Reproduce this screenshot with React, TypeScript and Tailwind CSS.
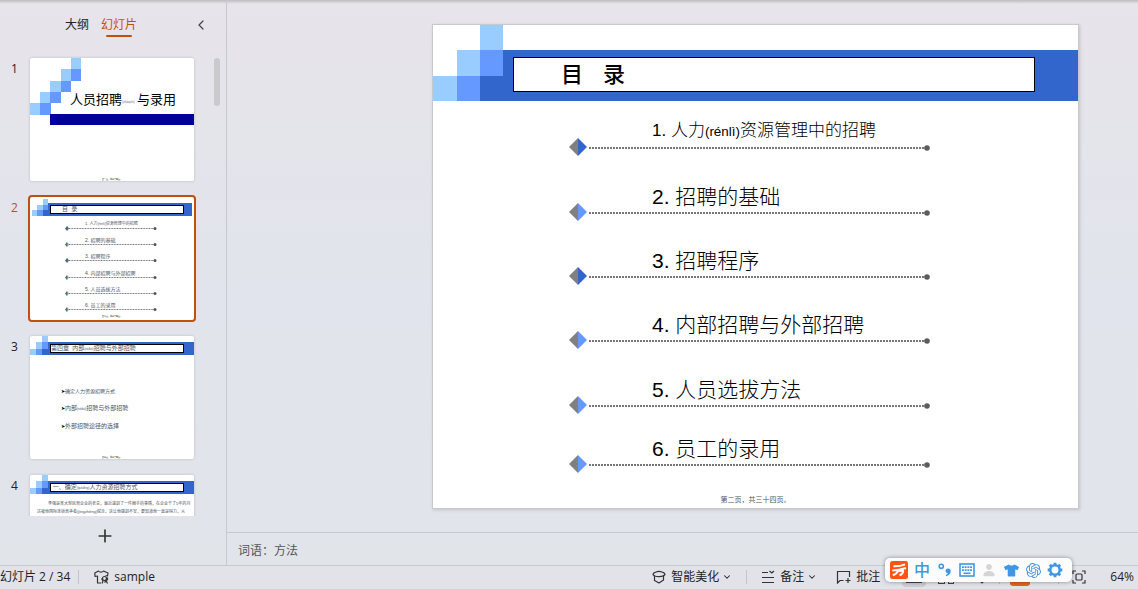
import React from "react";
import { ChevronDown, ChevronLeft, Plus } from "lucide-react";
import { FaTshirt } from "react-icons/fa";
import { IoPerson } from "react-icons/io5";
import { SiOpenai } from "react-icons/si";

const UI_FONT = "font-['Open_Sans','Noto_Sans_CJK_SC',sans-serif]";
const SLIDE_FONT = "font-['Liberation_Sans','Noto_Sans_CJK_SC',sans-serif]";

interface AgendaItem {
  no: number;
  text: React.ReactNode;
  color: string;
  gap: string;
  thumbGap: string;
}

const AGENDA: AgendaItem[] = [
  {
    no: 1,
    text: (
      <>
        人力<span className="text-[79%]">(rénlì)</span>资源管理中的招聘
      </>
    ),
    color: "#3366cc",
    gap: "pt-[19px] text-[17px]",
    thumbGap: "pt-[5px] text-[4px]",
  },
  { no: 2, text: "招聘的基础", color: "#6699ff", gap: "pt-[30px] text-[21px]", thumbGap: "pt-[6px] text-[5px]" },
  { no: 3, text: "招聘程序", color: "#3366cc", gap: "pt-[29px] text-[21px]", thumbGap: "pt-[6px] text-[5px]" },
  { no: 4, text: "内部招聘与外部招聘", color: "#6699ff", gap: "pt-[29px] text-[21px]", thumbGap: "pt-[7px] text-[5px]" },
  { no: 5, text: "人员选拔方法", color: "#6699ff", gap: "pt-[30px] text-[21px]", thumbGap: "pt-[6px] text-[5px]" },
  { no: 6, text: "员工的录用", color: "#6699ff", gap: "pt-[24px] text-[21px]", thumbGap: "pt-[6px] text-[5px]" },
];

function Stairs({ className }: { className: string }) {
  return (
    <svg className={className} viewBox="0 0 70 76" preserveAspectRatio="none" shapeRendering="crispEdges" aria-hidden="true">
      <path d="M47 0h23v26H47zM24 25h23v26H24zM0 51h24v25H0z" fill="#99ccff" />
      <path d="M47 25h23v26H47zM24 51h23v25H24z" fill="#6699ff" />
      <path d="M47 51h23v25H47z" fill="#3366cc" />
    </svg>
  );
}

function ThumbHeader({ compact = false, children }: { compact?: boolean; children: React.ReactNode }) {
  return (
    <div className="flex">
      <Stairs className={compact ? "h-[17px] w-4 shrink-0" : "h-[19px] w-[18px] shrink-0"} />
      <div className={compact ? "flex-1 pt-1" : "flex-1 pt-[6px]"}>
        <div className={`h-[13px] bg-[#3366cc] pt-[2px] pl-[2px] ${compact ? "pr-2" : "pr-[10px]"}`}>
          <div className="h-[9px] border border-black bg-white text-[6px] leading-[7px] whitespace-pre text-gray-600">
            {children}
          </div>
        </div>
      </div>
    </div>
  );
}

function ThumbFooter({ children }: { children: React.ReactNode }) {
  return (
    <div className="mt-auto text-center text-[2px] leading-[4px] text-black">{children}</div>
  );
}

function TitleThumb() {
  return (
    <>
      <div className="flex items-end">
        <svg className="h-[57px] w-[51px] shrink-0" viewBox="0 0 51 57" shapeRendering="crispEdges" aria-hidden="true">
          <path d="M41 0h10v11H41zM31 11h10v12H31zM20 23h11v11H20zM10 34h10v11H10zM0 45h10v12H0z" fill="#99ccff" />
          <path d="M41 11h10v12H41zM31 23h10v11H31zM20 34h11v11H20zM10 45h11v12H10z" fill="#6699ff" />
        </svg>
        <div className="-ml-[11px] flex items-center pb-[3px] text-[13px] leading-[20px] whitespace-nowrap text-black">
          人员招聘<span className="w-[15px] pt-1 text-[3px] text-gray-500">(zhāopìn)</span>与录用
        </div>
      </div>
      <div className="-mt-px ml-5 h-[11px] bg-[#000099]" />
      <ThumbFooter>第一页，共三十四页。</ThumbFooter>
    </>
  );
}

function AgendaThumb() {
  return (
    <>
      <ThumbHeader compact>
        <span className="pl-[11px]">目  录</span>
      </ThumbHeader>
      <ul className="ml-[33px] w-[92px]">
        {AGENDA.map((item) => (
          <li key={item.no} className={item.thumbGap}>
            <div className="pl-5 leading-[6px] whitespace-nowrap text-gray-600">
              {item.no}. {item.text}
            </div>
            <svg className="-mt-px block h-[5px] w-full" viewBox="0 0 92 5" aria-hidden="true">
              <path d="M2 0v5L0 2.500z" fill="#666" />
              <path d="M2 0v5l2-2.500z" fill={item.color} />
              <path d="M4 2.500h85" stroke="#777" strokeDasharray="1 .6" />
              <circle cx="90" cy="2.500" r="1.500" fill="#555" />
            </svg>
          </li>
        ))}
      </ul>
      <ThumbFooter>第二页，共三十四页。</ThumbFooter>
    </>
  );
}

function ChapterThumb() {
  return (
    <>
      <ThumbHeader>
        第四章  内部<span className="text-[3px]">(nèibù)</span>招聘与外部招聘
      </ThumbHeader>
      <ul className="mt-8 ml-[31px] flex flex-col gap-[9px] text-[6px] leading-[8px] whitespace-nowrap text-gray-600">
        <li className="text-[5px]">
          <span className="text-black">➤</span>确定人力资源招聘方式
        </li>
        <li>
          <span className="text-[5px] text-black">➤</span>内部<span className="text-[3px]">(nèibù)</span>招聘与外部招聘
        </li>
        <li>
          <span className="text-[5px] text-black">➤</span>外部招聘途径的选择
        </li>
      </ul>
      <ThumbFooter>第三页，共三十四页。</ThumbFooter>
    </>
  );
}

function BodyThumb() {
  return (
    <>
      <ThumbHeader>
        {" "}一、确定<span className="text-[3px]">(quèdìng)</span>人力资源招聘方式
      </ThumbHeader>
      <p className="mt-[6px] pl-[7px] text-[4px] leading-[8px] whitespace-nowrap text-gray-600">
        <span className="pl-[11px]">李强是某大型民营企业的老总，最近遇到了一件棘手的事情，在企业干了5年的刘</span>
        <br />
        达被他国际连锁竞争者(jìngzhēng)挖走，这让他感到不安，要知道他一直是得力，从
      </p>
    </>
  );
}

const THUMBS = [
  { no: 1, Content: TitleThumb },
  { no: 2, Content: AgendaThumb },
  { no: 3, Content: ChapterThumb },
  { no: 4, Content: BodyThumb },
];

function Sidebar() {
  const [selected, setSelected] = React.useState(2);

  return (
    <aside className="flex w-[227px] shrink-0 flex-col border-r border-[#c6c9cf]">
      <div className="flex h-14 shrink-0 items-start pt-[15px] pr-[17px] pl-[65px] text-[12px] leading-[20px]">
        <button type="button" className="mr-3 text-[#222]">大纲</button>
        <button type="button" className="flex flex-col items-center text-[#c05010]">
          幻灯片
          <span className="h-[2px] w-[26px] rounded bg-[#c05010]" />
        </button>
        <button type="button" aria-label="收起" className="ml-auto pt-[2px] text-[#444]">
          <ChevronLeft size={16} strokeWidth={1.800} />
        </button>
      </div>

      <div className="flex min-h-0 flex-1 overflow-hidden">
        <ol className="flex flex-1 flex-col gap-3">
          {THUMBS.map(({ no, Content }) => (
            <li key={no} className="flex shrink-0">
              <span className={`w-7 pt-[3px] pl-[11px] text-[12px] leading-[20px] ${selected === no ? "text-[#c05010]" : "text-[#222]"}`}>
                {no}
              </span>
              <button
                type="button"
                aria-label={`幻灯片 ${no}`}
                onClick={() => setSelected(no)}
                className={`h-[127px] w-[168px] rounded text-left ${SLIDE_FONT} ${
                  selected === no ? "border-2 border-[#c05010] bg-white p-[2px]" : "p-[2px]"
                }`}
              >
                <div className={`flex h-full flex-col overflow-hidden rounded-[2px] bg-white ${selected === no ? "" : "shadow-[0_0_3px_rgba(0,0,0,0.18)]"}`}>
                  <Content />
                </div>
              </button>
            </li>
          ))}
        </ol>
        <div className="mt-[2px] mr-[6px] h-12 w-[6px] rounded-full bg-[#c9c9ce]" />
      </div>

      <div className="flex h-[49px] shrink-0 justify-center pt-[10px] pr-[17px]">
        <button type="button" aria-label="新建幻灯片" className="h-5 text-[#333]">
          <Plus size={20} strokeWidth={2} />
        </button>
      </div>
    </aside>
  );
}

function Slide() {
  return (
    <article className={`flex h-full flex-col border border-[#c8c8cf] bg-white shadow-[1px_1px_3px_rgba(0,0,0,0.15)] ${SLIDE_FONT}`}>
      <header className="flex">
        <Stairs className="h-[76px] w-[70px] shrink-0" />
        <div className="flex-1 pt-[25px]">
          <div className="h-[51px] bg-[#3366cc] pt-[7px] pr-[43px] pl-[10px]">
            <h1 className="h-[35px] border border-black bg-white pl-[47px] text-[22px] leading-[33px] font-medium whitespace-pre text-black">
              目<span className="pl-5">录</span>
            </h1>
          </div>
        </div>
      </header>

      <ul className="ml-[136px] w-[362px]">
        {AGENDA.map((item) => (
          <li key={item.no} className={item.gap}>
            <div className="pl-[83px] leading-[22px] font-light whitespace-nowrap text-black">
              {item.no}. {item.text}
            </div>
            <svg className="-mt-[5px] block h-[18px] w-full" viewBox="0 0 362 18" aria-hidden="true">
              <path d="M9 0v18L0 9z" fill="#808080" />
              <path d="M9 0v18l9-9z" fill={item.color} />
              <path d="M20 10h336" stroke="#777" strokeWidth="2" strokeDasharray="2 1" />
              <circle cx="358" cy="10" r="2.800" fill="#5c5c5c" />
            </svg>
          </li>
        ))}
      </ul>

      <footer className="mt-auto pb-[3px] text-center text-[7px] leading-[10px] text-[#555]">
        第二页，共三十四页。
      </footer>
    </article>
  );
}

function StatusBar() {
  return (
    <footer className="flex h-6 shrink-0 items-center border-t border-[#c6c9cf] bg-[#e2e3e9] pb-[2px] text-[12px] leading-[18px] whitespace-nowrap text-[#222]">
      <span>幻灯片 2 / 34</span>
      <span className="ml-2 h-[14px] w-px bg-[#c3c5ca]" />
      <button type="button" className="ml-[15px] flex items-center gap-1">
        <svg width="16" height="16" viewBox="0 0 16 16" fill="none" stroke="#333" strokeWidth="1.200" strokeLinejoin="round" aria-hidden="true">
          <path d="M7 14H3.500V7L1 7.500.800 4 4.500 2c1 1.500 4 1.500 5 0L14 4l-.500 3-2-.500" />
          <circle cx="10.500" cy="9.500" r="2" />
          <path d="m7.500 9.500 1.500 2.500-1 2.500M12 11.500l1.500 3M13.500 8.500v2l-3 3" />
        </svg>
        <span className="text-[12px]">sample</span>
      </button>

      <button type="button" className="ml-auto flex items-center">
        <svg className="mr-[5px]" width="14" height="14" viewBox="0 0 14 14" fill="none" stroke="#333" strokeWidth="1.200" strokeLinejoin="round" aria-hidden="true">
          <path d="M1 4.500c0-1.500 1.500-2 3-2.500 2-.900 4-.900 6 0 1.500.500 3 1 3 2.500L11.500 6v4L7 13l-4.500-2.500V6z" />
          <path d="M2.500 6c3 .800 7 .800 9.500-.500" />
        </svg>
        智能美化
        <ChevronDown className="ml-[3px]" size={10} strokeWidth={2.500} />
      </button>
      <span className="mx-[14px] h-[14px] w-px bg-[#c3c5ca]" />
      <button type="button" className="flex items-center">
        <svg className="mr-[5px]" width="14" height="14" viewBox="0 0 14 14" fill="none" stroke="#333" strokeWidth="1.200" aria-hidden="true">
          <path d="M1 2.500h6M1 7.500h12M1 12.500h12M8.500 1l2.300 2L13 1" />
        </svg>
        备注
        <ChevronDown className="ml-[3px]" size={10} strokeWidth={2.500} />
      </button>
      <button type="button" className="ml-[19px] flex items-center">
        <svg className="mr-[5px]" width="15" height="14" viewBox="0 0 15 14" fill="none" stroke="#333" strokeWidth="1.200" aria-hidden="true">
          <path d="M7.500 10.500H4L1.500 13V1.500h12V7M9.500 10.500h5M12 8v5" />
        </svg>
        批注
      </button>
      <button type="button" aria-label="普通视图" className="ml-[22px] flex h-5 w-6 items-end justify-center rounded bg-[#cccdd3] pb-1">
        <span className="h-2 w-4 border border-[#444]" />
      </button>
      <button type="button" aria-label="幻灯片浏览" className="ml-3 grid h-4 w-4 grid-cols-2 gap-[3px] pb-px">
        <span className="border border-[#444]" />
        <span className="border border-[#444]" />
        <span className="border border-[#444]" />
        <span className="border border-[#444]" />
      </button>
      <button type="button" aria-label="阅读视图" className="ml-5">
        <svg width="16" height="16" viewBox="0 0 16 16" fill="none" stroke="#444" strokeWidth="1.200" aria-hidden="true">
          <path d="M1 2h14v9h-4l-3 3-3-3H1z" />
        </svg>
      </button>
      <span className="ml-[9px] h-[14px] w-px bg-[#c3c5ca]" />
      <button type="button" aria-label="放映" className="ml-[10px] h-[18px] w-5 rounded-[3px] bg-[#e9611c]" />
      <span className="ml-7 h-[14px] w-px bg-[#c3c5ca]" />
      <button type="button" aria-label="适应窗口" className="ml-[13px]">
        <svg width="14" height="14" viewBox="0 0 14 14" fill="none" stroke="#333" strokeWidth="1.200" aria-hidden="true">
          <path d="M1 4V1h3M10 1h3v3M13 10v3h-3M4 13H1v-3" />
          <rect x="4" y="4" width="6" height="6" rx="1" />
        </svg>
      </button>
      <span className="mr-1 ml-6">64%</span>
    </footer>
  );
}

function ImeToolbar() {
  const cell = "flex h-full w-[22px] items-center justify-center";

  return (
    <div className="absolute right-[66px] bottom-[7px] flex h-6 items-center rounded-[5px] bg-[#fcfcfd] pr-[6px] pl-[3px] text-[#3e97e4] shadow-[0_0_4px_rgba(0,0,0,0.4)]">
      <button type="button" aria-label="输入法" className={cell}>
        <svg width="18" height="18" viewBox="0 0 18 18" aria-hidden="true">
          <rect width="18" height="18" rx="2.500" fill="#ff5511" />
          <path
            d="M3.500 5.300C8 5.500 11.500 4.800 15 3.300M2.300 9.500C7 9.300 12 8.300 16 7M8.700 8.800C7.500 11.500 5.500 13.300 2.800 14.300M9 10.300c2.500-.900 4.300-1.300 4.200-.200-.100 1.700-1.200 3.200-3.700 4.200"
            fill="none"
            stroke="#fff"
            strokeWidth="2"
          />
        </svg>
      </button>
      <button type="button" className="flex h-full w-6 items-center justify-center text-[16px] leading-[22px] font-medium">中</button>
      <button type="button" aria-label="中文标点" className={cell}>
        <svg width="14" height="14" viewBox="0 0 14 14" aria-hidden="true">
          <circle cx="3.300" cy="3.300" r="2.100" fill="none" stroke="currentColor" strokeWidth="1.600" />
          <path d="M9.800 5.500c2.400 0 3.400 1.700 2.800 3.700-.500 2-2 3.200-4.300 4l-.500-1.200c1.200-.500 1.900-1.100 2.100-1.900-1.300 0-2.300-.900-2.300-2.300 0-1.300 1-2.300 2.200-2.300z" fill="currentColor" />
        </svg>
      </button>
      <button type="button" aria-label="软键盘" className={cell}>
        <svg width="16" height="14" viewBox="0 0 16 14" fill="none" stroke="currentColor" aria-hidden="true">
          <rect x="1" y="1" width="14" height="12" strokeWidth="1.600" />
          <path d="M3 4.200h10M3 7.100h10" strokeWidth="1.700" strokeDasharray="1.900 .800" />
          <path d="M4.500 10.300h7" strokeWidth="1.500" />
        </svg>
      </button>
      <button type="button" aria-label="账号" className={`${cell} text-[#d5d5d5]`}>
        <IoPerson size={14} />
      </button>
      <button type="button" aria-label="皮肤" className={cell}>
        <FaTshirt size={15} />
      </button>
      <button type="button" aria-label="智能助手" className={cell}>
        <SiOpenai size={15} />
      </button>
      <button type="button" aria-label="设置" className={cell}>
        <svg width="16" height="16" viewBox="0 0 16 16" fill="none" stroke="currentColor" aria-hidden="true">
          <circle cx="8" cy="8" r="4.700" strokeWidth="2.500" />
          <path d="M8 .700v2.300M8 13v2.300M.700 8H3M13 8h2.300M2.800 2.800l1.700 1.700M11.500 11.500l1.700 1.700M13.200 2.800l-1.700 1.700M4.500 11.500l-1.700 1.700" strokeWidth="2.800" />
        </svg>
      </button>
    </div>
  );
}

export default function App() {
  return (
    <div className={`relative flex h-screen flex-col overflow-hidden bg-linear-to-b from-[#e7e4ea] via-[#e1e4ec] to-[#e1e5ea] ${UI_FONT}`}>
      <div className="-mb-1 h-1 shrink-0 bg-linear-to-b from-[#bdbcc1] to-transparent" />
      <div className="flex min-h-0 flex-1">
        <Sidebar />
        <div className="flex min-w-0 flex-1 flex-col">
          <main className="min-h-0 flex-1 pt-6 pr-[59px] pb-[23px] pl-[205px]">
            <Slide />
          </main>
          <div className="h-[33px] shrink-0 border-t border-[#c6c9cf] px-[11px] pt-2 text-[12px] leading-[20px] text-[#555]">
            词语：方法
          </div>
        </div>
      </div>
      <StatusBar />
      <ImeToolbar />
    </div>
  );
}
